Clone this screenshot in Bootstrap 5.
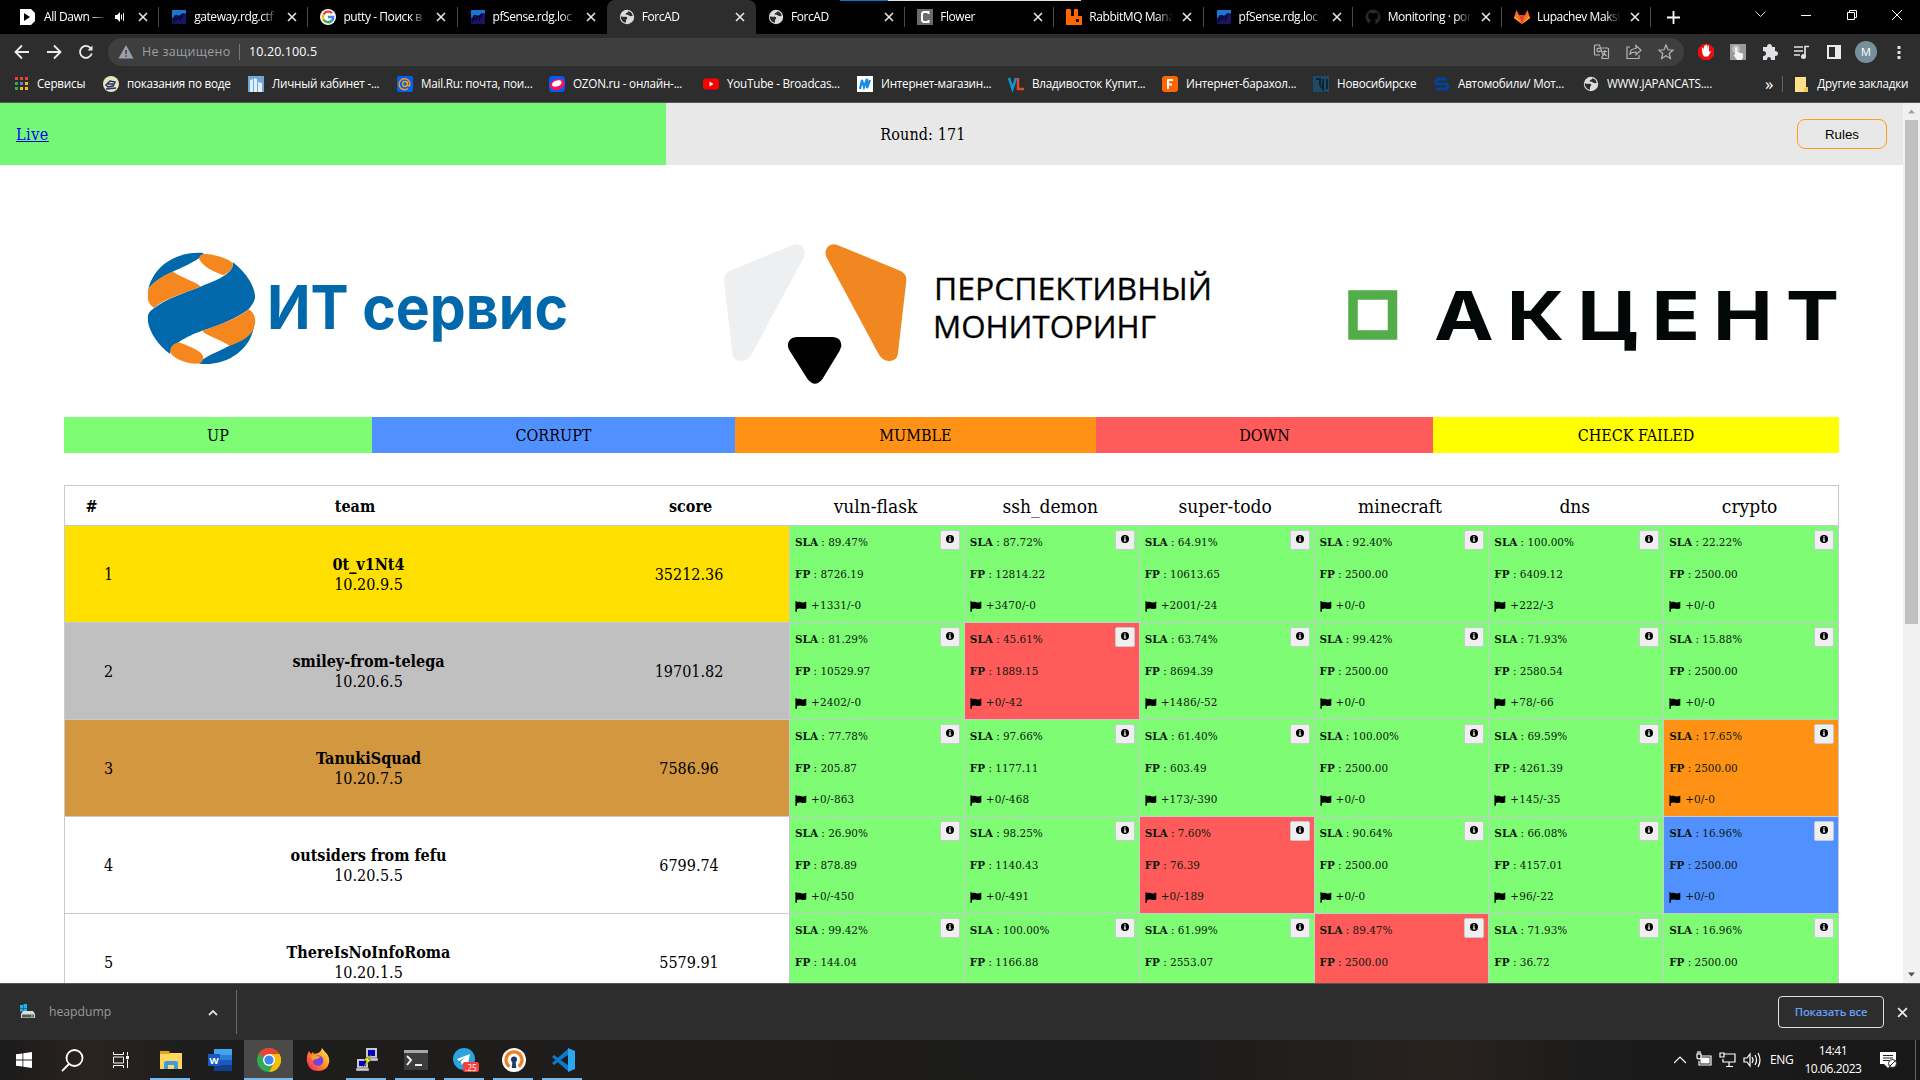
<!DOCTYPE html>
<html lang="ru">
<head>
<meta charset="utf-8">
<title>ForcAD</title>
<link href="https://cdn.jsdelivr.net/npm/bootstrap@5.3.0/dist/css/bootstrap.min.css" rel="stylesheet">
<style>
:root{--ui:"Open Sans","Noto Sans",sans-serif;--serif:"DejaVu Serif Condensed","DejaVu Serif",serif;--up:#7dfc74;--corrupt:#5191ff;--mumble:#ff9114;--down:#ff5b5b}
html,body{width:1920px;height:1080px;overflow:hidden}
body{font-family:var(--ui);font-size:12px;line-height:1;color:#fff;background:#000}
svg{flex:none;display:block}
.tabstrip{height:34px;background:#000}
.topline{left:840px;top:0;width:241px;height:1px;background:linear-gradient(90deg,#0078d7 48px,#e5e5e5 48px)}
.tab{width:149.2px;padding-left:12px;height:34px;letter-spacing:-.43px}
.tab:first-child{padding-left:9px}
.tab::after{content:"";position:absolute;right:0;top:7px;width:1px;height:20px;background:#4a4a4a}
.tab.on{background:#2d2d2d;border-radius:8px 8px 0 0}
.tab.on::after,.tab.nosep::after{display:none}
.ttl{width:85px;margin-left:7px;margin-right:1px;line-height:18px;overflow:hidden;white-space:nowrap;-webkit-mask-image:linear-gradient(90deg,#000 68px,transparent 84px)}
.ttl.short{width:64px;margin-left:9px;-webkit-mask-image:linear-gradient(90deg,#000 46px,transparent 64px)}
.toolbar{height:36px;background:#2d2d2d}
.omni{width:1576px;height:28px;margin-left:7px;border-radius:14px;background:#3e3e3e;font-size:12.5px;padding:0 7px 0 10px}
.bookmarks{height:33px;background:#2d2d2d;border-bottom:1px solid #555;padding:0 0 4px 13px;font-size:11.7px;letter-spacing:-.24px;white-space:nowrap}
.bm{gap:8px}
.page{height:880px;background:#fff;color:#000;font-family:var(--serif);font-size:16px;overflow:hidden}
.content-col{width:1903px}
.topbar{height:62px;padding:2px 16px 0;background:linear-gradient(90deg,#75f776 666px,#e8e8e8 666px)}
.topbar a{color:#00e;letter-spacing:.5px}
.rules{width:90px;height:30px;margin-top:-2px;border:1px solid #ff9d1a;border-radius:8px;background:#e8e8e8;font:13.3px "Liberation Sans",sans-serif;color:#000}
.wrap{padding:0 64px}
.legend{height:36px}
.legend>div{padding-top:2px}
.board{margin-top:32px;border:1px solid #c6cad1;height:600px}
.hrow{height:40px;border-bottom:1px solid #c6cad1;padding-top:2px}
.hrow .svc{font-size:19px;padding:0 2px 1px 0}
.trow{height:97px;border-bottom:1px solid #c6cad1}
.svc{width:174.83px}
.trow .svc{border-left:1px solid #c6cad1;padding:1px 0 0 5px;font-size:11.6px;color:#0b1a0b}
.trow .svc>div{height:31.9px;display:flex;align-items:center}
.trow .svc>div:nth-child(3){letter-spacing:.15px;padding-bottom:1px}
.info{right:4px;top:4px;width:20px;height:20px;background:#efefef;border:1px solid #c6cad1;border-radius:2px;display:flex;justify-content:center;padding-top:4px}
.up{background:var(--up)}.corrupt{background:var(--corrupt)}.mumble{background:var(--mumble)}.down{background:var(--down)}.failed{background:#ff0}
.p1{background:#ffdf00}.p2{background:silver}.p3{background:#d2973f}.p4{background:#fff}
.team{line-height:20px;padding-top:2px}
.num{padding-top:2px}
.rail{width:17px;background:#f1f1f1}
.thumb{height:504px;background:#c1c1c1;margin:0 auto auto;width:13px}
.dl{height:57px;background:#2d2d2d;border-top:1px solid #555}
.showall{width:106px;height:32px;border:1px solid #e0e0e0;border-radius:4px;color:#669df6;font-size:11.3px;font-weight:600;letter-spacing:-.22px}
.taskbar{height:40px;background:linear-gradient(90deg,#1b1b1b,#2a2320 90px,#1d1d1d 190px,#1f1d1b 600px,#1b1b1b 1150px,#28221f 1450px,#1b1b1b 1600px,#181818)}
.app{width:49px;height:40px;display:flex;align-items:center;justify-content:center;position:relative}
.app:first-child{width:48px}
.run::after{content:"";position:absolute;left:4px;right:5px;bottom:0;height:2px;background:#76b9ed}
.app.cur{background:#4b4a48}.app.cur::after{left:0;right:0}
</style>
<script src="https://cdn.jsdelivr.net/npm/bootstrap@5.3.0/dist/js/bootstrap.bundle.min.js"></script>
</head>
<body class="d-flex flex-column">
<svg width="0" height="0" class="position-absolute">
<symbol id="x" viewBox="0 0 10 10"><path d="M1 1l8 8M9 1l-8 8" stroke="#e8e8e8" stroke-width="1.6"/></symbol>
<symbol id="globe" viewBox="0 0 16 16"><circle cx="8" cy="8" r="7.200" fill="#dadce0"/><path d="M1.800 7.200Q4 8 6.500 7.800 8.300 7.800 8.300 9T7 10.800V13.700Q3 13.200 1.800 9zM13.800 6.500Q12 8 10 6.600T7 5.800Q6 5 7.300 4 9 3.800 9.200 2.200 12.500 2.800 13.800 6.500z" fill="#2d2d2d"/></symbol>
<symbol id="pf" viewBox="0 0 16 16"><path d="M1 1h14v5L1 9z" fill="#1976d2"/><path d="M1 9l14-5v11H1z" fill="#1b1464"/><path d="M2.500 13.500L4 6.500M4 7q3.500-1 3 1.500T3.600 10M9 11.500l1.300-5q.5-1.800 2.500-1.500M8.500 7.500h3.500" fill="none" stroke="#080830" stroke-width="1.500"/></symbol>
<symbol id="flag" viewBox="0 0 12 11"><path d="M.4.3h1.500v1C4 .5 5.300.8 7 1.400c1.500.4 2.800 0 4.300-.8v6.600C9.500 8.200 8 8.300 6.500 7.800 5 7.300 3.500 7.300 1.900 8v2.800H.4z"/></symbol>
<symbol id="inf" viewBox="0 0 8 8"><circle cx="4" cy="4" r="4"/><path d="M3.300 1.300h1.400v1.200H3.300zM2.900 3.200h1.800v2.400h.5v.9H2.800v-.9h.5V4.100h-.4z" fill="#efefef"/></symbol>
</svg>

<div class="tabstrip d-flex align-items-center position-relative">
<div class="topline position-absolute"></div>
<div id="tabs" class="d-flex" style="padding-left:10px"></div>
<svg class="ms-3" width="13" height="13" viewBox="0 0 13 13"><path d="M6.500 0v13M0 6.500h13" stroke="#fff" stroke-width="1.800"/></svg>
<div class="d-flex ms-auto align-items-center" style="gap:35.500px;padding:0 18px 5px 0">
<svg width="11" height="7" viewBox="0 0 11 7"><path d="M.5.5l5 5 5-5" fill="none" stroke="#ddd"/></svg>
<svg width="10" height="10" viewBox="0 0 10 10"><path d="M0 5.500h10" stroke="#fff"/></svg>
<svg width="10" height="10" viewBox="0 0 10 10"><path d="M.5 2.500h7v7h-7zM2.500 2.500v-2h7v7h-2" fill="none" stroke="#fff"/></svg>
<svg width="10" height="10" viewBox="0 0 10 10"><path d="M0 0l10 10M10 0L0 10" stroke="#fff"/></svg>
</div>
</div>

<div class="toolbar d-flex align-items-center">
<svg width="101" height="36" viewBox="0 0 101 36" fill="none" stroke="#e8eaed" stroke-width="1.800"><path d="M29 18H16M22 11.500L15.500 18l6.500 6.500M47 18h13M54 11.500l6.500 6.500-6.500 6.500M91 14.500a6 6 0 1 0 .8 5"/><path d="M92.500 11.500v5h-5z" fill="#e8eaed" stroke="none"/></svg>
<div class="omni d-flex align-items-center">
<svg width="16" height="14" viewBox="0 0 16 14"><path d="M8 0l7.500 13.500H.5z" fill="#9aa0a6"/><path d="M7.200 5h1.600v4H7.200zM7.200 10.200h1.600v1.600H7.200z" fill="#3e3e3e"/></svg>
<span style="color:#9aa0a6;margin-left:8px;width:97px;white-space:nowrap;letter-spacing:.3px">Не защищено</span><span style="border-left:1px solid #777;height:16px;margin-right:9px"></span><span style="letter-spacing:.1px">10.20.100.5</span>
<svg class="ms-auto" width="84" height="18" viewBox="0 0 84 18" fill="none" stroke="#b4b6b9" stroke-width="1.200"><path d="M7 12H2.500Q1.500 12 1.500 11V3q0-1 1-1h4l3.500 10-1.500 3.500M8.500 5h6q1 0 1 1v8.500q0 1-1 1h-6"/><path d="M7 5.500q-3-1-3 1.500t3 1.500V7M9.500 8.500h4.500M12 7v1.500c0 2-1 3-2 4M10.500 10l3 3"/><path d="M37 4h-3v11.500h12V12M37 11c0-4 3-5.500 6-5.500V2.500l5 4.700-5 4.500V9c-3 0-4.500.5-6 2z"/><path d="M73 2l2 4.800 5 .4-3.800 3.300 1.200 5-4.400-2.700-4.400 2.700 1.200-5L66 7.200l5-.4z"/></svg>
</div>
<svg style="margin-left:12px" width="220" height="28" viewBox="1696 38 220 28"><path d="M1702.500 44h7l4.500 4.500v7l-4.500 4.500h-7l-4.500-4.500v-7z" fill="#e81010"/><path d="M1702 51v-3q1-1 1.500 0l.5 3v-5q1-1 1.500 0v4-5q1-1 1.500 0v5l.5-4q1-1 1.500 0v6l1-1q1 0 .5 1.500l-2.500 4h-4q-2-3-2-6z" fill="#fff"/><rect x="1730" y="44" width="16" height="16" fill="#9a9a9a"/><circle cx="1736" cy="49" r="4" fill="#bdbdbd"/><path d="M1735 48q1.500-2 2.500 0v4l5.500 1.500v4l-1.500 2.500h-4.500l-3.500-5 1.500-.5z" fill="#f2f2f2"/><path d="M1763 47h4q0-3 2.500-3t2.500 3h3v4q3 0 3 2.500t-3 2.500v4h-4q0-3-2-3t-2 3h-4v-4q3 0 3-2.500t-3-2.500z" fill="#dfe1e5"/><path d="M1794 47h9M1794 51h9M1794 55h6M1809 46.500h-4v10" stroke="#dfe1e5" stroke-width="1.700" fill="none"/><circle cx="1803.500" cy="56.500" r="2.500" fill="#dfe1e5"/><path d="M1828 46h12v12h-12z" stroke="#e8eaed" stroke-width="2" fill="none"/><path d="M1835 46h5v12h-5z" fill="#e8eaed"/><circle cx="1866" cy="52" r="11" fill="#78909c"/><text x="1866" y="56" fill="#fff" font-size="11" text-anchor="middle">M</text><path d="M1897.500 46h3v3h-3zM1897.500 51h3v3h-3zM1897.500 56h3v3h-3z" fill="#dfe1e5"/></svg>
</div>

<div class="bookmarks d-flex align-items-center"><div id="bms" class="d-flex"></div>
<span style="font-size:17px;line-height:14px;margin-left:32px">»</span><span style="border-left:1px solid #666;height:16px;margin:0 12px 0 9px"></span>
<svg width="13" height="15" viewBox="0 0 13 15"><path d="M0 0h11v10h2v5H0z" fill="#ffe08a"/><path d="M11 10h2v5h-4v-3z" fill="#f5c84b"/></svg><span style="margin-left:9px">Другие закладки</span>
</div>

<div class="page d-flex">
<div class="content-col">
<div class="topbar d-flex justify-content-between align-items-center"><a href="#">Live</a><span style="letter-spacing:.1px">Round: 171</span><button class="rules">Rules</button></div>
<div class="wrap">
<div class="d-flex" style="padding-left:84px">
<svg width="420" height="252" viewBox="148 165 420 252"><g transform="translate(100 220) scale(.40816 .33333)"><g fill="#0068ab"><path d="M118 210C130 140 185 93 253 99V104C235 125 195 145 178 155 150 172 125 190 118 210z"/><path d="M325 126C360 160 380 200 380 232 378 250 364 268 364 268 340 292 290 318 250 332 210 350 172 375 172 402 135 370 115 320 117 290 118 275 133 264 133 264 160 238 200 222 250 198 300 175 330 155 325 126z"/><path d="M243 431C250 412 290 395 317 377 345 362 370 345 377 320 368 390 310 440 243 431z"/></g><g fill="#f6871f"><path d="M242 115C246 100 255 102 262 102 290 105 320 120 325 130 328 145 315 158 303 166 275 155 250 138 242 115z"/><path d="M178 155C200 172 240 188 247 200 200 222 150 240 133 264 115 250 115 230 118 210 125 190 155 165 178 155z"/><path d="M364 268C380 280 384 300 377 325 370 350 340 370 317 377 300 360 258 346 250 332 290 318 345 290 364 268z"/><path d="M193 367C230 382 255 400 253 415 250 430 245 431 235 431 200 428 175 410 172 395 171 382 180 370 193 367z"/></g></g><text x="267" y="329" font-family="Inter,sans-serif" font-weight="700" font-size="60" fill="#0068ab" textLength="301" lengthAdjust="spacingAndGlyphs">ИТ сервис</text></svg>
<svg style="margin-left:155px" width="490" height="252" viewBox="723 165 490 252"><g transform="translate(700 220) scale(.35714 .33333)"><path d="M83 153L262 74Q285 68 293 92 295 102 290 113L147 398Q135 424 113 423 93 420 91 402L67 180Q67 162 83 153z" fill="#eeeff1"/><path d="M83 153L262 74Q285 68 293 92 295 102 290 113L147 398Q135 424 113 423 93 420 91 402L67 180Q67 162 83 153z" fill="#f18721" transform="translate(645) scale(-1 1)"/><path d="M270 351H372Q396 353 396 378L391 392 343 477Q322 505 301 477L251 392Q246 385 246 375 248 353 270 351z"/></g><g font-family="Open Sans,sans-serif" font-weight="400" font-size="31" stroke="#000" stroke-width=".3"><text x="934" y="300" textLength="278" lengthAdjust="spacingAndGlyphs">ПЕРСПЕКТИВНЫЙ</text><text x="933" y="337.500" textLength="223" lengthAdjust="spacingAndGlyphs">МОНИТОРИНГ</text></g></svg>
<svg style="margin-left:134px" width="492" height="252" viewBox="1347 165 492 252"><path d="M1353 295h39.500v40H1353z" fill="none" stroke="#52ac48" stroke-width="9.500"/><text x="1434" y="339.500" font-family="Inter,sans-serif" font-weight="700" font-size="68" fill="#030708" letter-spacing="11" textLength="418" lengthAdjust="spacingAndGlyphs">АКЦЕНТ</text></svg>
</div>
<div class="legend d-flex text-center align-items-stretch" id="legend"></div>
<div class="board" id="board"></div>
</div>
</div>
<div class="rail d-flex flex-column align-items-center"><svg width="17" height="17" viewBox="0 0 17 17"><path d="M5 10.500l3.500-4 3.500 4z" fill="#a3a3a3"/></svg><div class="thumb"></div><svg width="17" height="17" viewBox="0 0 17 17"><path d="M5 6.500l3.500 4 3.500-4z" fill="#505050"/></svg></div>
</div>

<div class="dl d-flex align-items-center">
<svg style="margin-left:20px" width="16" height="16" viewBox="0 0 16 16"><path d="M0 1h3v3H0zM3.500 0H7v4H3.500zM0 4.500h3v3H0zM3.500 4.500H7V8H3.500z" fill="#18b5f0"/><path d="M3 7h10l2 3v4H1v-4z" fill="#d8dcdf"/><path d="M2 10.500h12v3H2z" fill="#555"/><path d="M11 11h2v2h-2z" fill="#3c3"/></svg>
<span style="color:#999;font-size:12.200px;margin-left:13px;width:159px">heapdump</span>
<svg width="10" height="7" viewBox="0 0 10 7"><path d="M1 6l4-4 4 4" fill="none" stroke="#ddd" stroke-width="1.800"/></svg>
<span style="height:44px;border-left:1px solid #6a6a6a;margin-left:18px"></span>
<button class="showall bg-transparent ms-auto">Показать все</button>
<svg style="margin:0 12px 0 13px" width="11" height="11"><use href="#x"/></svg>
</div>

<div class="taskbar d-flex align-items-center">
<div class="app"><svg width="16" height="16" viewBox="0 0 16 16" fill="#fff"><path d="M0 2.300l6.500-.9v6.200H0zM7.300 1.300L16 0v7.600H7.300zM0 8.400h6.500v6.200L0 13.700zM7.300 8.400H16V16l-8.700-1.300z"/></svg></div>
<div class="app"><svg width="23" height="23" viewBox="0 0 23 23" fill="none" stroke="#fff" stroke-width="1.800"><circle cx="13.500" cy="9" r="8"/><path d="M8 15l-7 7"/></svg></div>
<div class="app"><svg width="17" height="16" viewBox="0 0 17 16" fill="none" stroke="#fff"><path d="M.5 0v2.500h10V0M.5 5h10v6H.5zM.5 16v-2.500h10V16M14.500 0v3.500M14.500 7.500V16"/><path d="M13 4h3v3h-3z" fill="#fff" stroke="none"/></svg></div>
<div class="app run"><svg width="22" height="19" viewBox="0 0 22 19"><path d="M0 0h9l1 2h12v16H0z" fill="#e5a50f"/><path d="M0 3h9l1-1h12v16H0z" fill="#ffd75e"/><path d="M4 18v-6q0-2 2-2h10q2 0 2 2v6h-4v-4H8v4z" fill="#3f9bdc"/></svg></div>
<div class="app"><svg width="24" height="22" viewBox="0 0 24 22"><path d="M6 0h18v22H6z" fill="#185abd"/><path d="M6 0h18v6H6z" fill="#41a5ee"/><path d="M6 6h18v5H6z" fill="#2b7cd3"/><path d="M6 16h18v6H6z" fill="#103f91"/><rect y="5" width="12" height="12" fill="#185abd"/><text x="6" y="14.500" font-size="9.500" font-weight="700" fill="#fff" text-anchor="middle">W</text></svg></div>
<div class="app run cur"><svg width="24" height="24" viewBox="0 0 24 24"><circle cx="12" cy="12" r="12" fill="#34a853"/><path d="M12 12L1.600 6A12 12 0 0 1 22.400 6z" fill="#ea4335"/><path d="M12 6h10.400A12 12 0 0 1 12 24l5.200-9z" fill="#fbbc05"/><circle cx="12" cy="12" r="6" fill="#fff"/><circle cx="12" cy="12" r="4.600" fill="#4285f4"/></svg></div>
<div class="app"><svg width="24" height="24" viewBox="0 0 24 24"><defs><linearGradient id="ff" x1="1" y1="0" x2="0" y2="1"><stop stop-color="#fff44f"/><stop offset=".5" stop-color="#ff8a25"/><stop offset="1" stop-color="#f0146a"/></linearGradient></defs><path d="M3 3l2 3 2-2 1 2 4-1q3-1 4-5 2 3 5 6 3 4 2 9-2 8-11 8T1 14Q0 8 3 3z" fill="url(#ff)"/><circle cx="12" cy="12.500" r="5.300" fill="#7542e5"/><path d="M5 8q4-2 7 0l3 1-4 2q-3 0-4 2-2-2-2-5z" fill="#ff9a28"/></svg></div>
<div class="app run"><svg width="24" height="24" viewBox="0 0 24 24"><path d="M12 1h9v8h-9zM3 12h9v7H3z" fill="#0000c8" stroke="#c9c9c9" stroke-width="2"/><path d="M10 10h13v3H10zM1 20h13v3H1z" fill="#d0d0d0" stroke="#333" stroke-width=".5"/><path d="M17 6l-8 6 3 1-4 6 8-7-3-1z" fill="#ff0" stroke="#222" stroke-width=".4"/></svg></div>
<div class="app run"><svg width="24" height="20" viewBox="0 0 24 20"><path d="M0 0h24v20H0z" fill="#3d3d3d"/><path d="M0 0h24v3H0z" fill="#a8a8a8"/><path d="M3 6l4 4-4 5M11 15h7" fill="none" stroke="#eee" stroke-width="2"/></svg></div>
<div class="app run"><svg style="margin-left:3px" width="26" height="24" viewBox="0 0 26 24"><circle cx="11" cy="11" r="11" fill="#2ba3dc"/><path d="M4 11l13-5-2.500 12-4-3-2 2-.5-4 5-4-7 4z" fill="#fff"/><rect x="10" y="14" width="16" height="10" rx="2" fill="#f4403a"/><text x="18" y="22.500" fill="#fff" font-size="8.500" text-anchor="middle">.25</text></svg></div>
<div class="app run"><svg width="24" height="24" viewBox="0 0 24 24"><circle cx="12" cy="12" r="12" fill="#fff"/><path d="M7.500 18.500a8 8 0 1 1 9 0" fill="none" stroke="#ef7f22" stroke-width="3.300"/><circle cx="12" cy="11.500" r="3" fill="#1c3c66"/><path d="M10.500 13h3l.8 7H9.700z" fill="#1c3c66"/></svg></div>
<div class="app run"><svg width="24" height="24" viewBox="0 0 24 24"><path d="M18 0v24L1 9l2-2 15 11V6L3 17l-2-2z" fill="#0b7bc8"/><path d="M17 0l7 3v18l-7 3z" fill="#29a8f2"/></svg></div>
<svg class="ms-auto" width="90" height="20" viewBox="1675 1050 90 20" fill="none" stroke="#fff" stroke-width="1.200"><path d="M1675 1063l6-6 6 6M1702 1056h10v9h-12v-4M1698 1054h4v3q0 2-2 2t-2-2zM1699 1051v3M1701 1051v3M1725 1054h11v8h-12v-3M1730 1062v4M1727 1066.500h7M1721 1053h4v4h-4z"/><path d="M1702 1058h8v5h-8z" fill="#fff"/><path d="M1745 1058h3l3-4v12l-3-4h-3zM1753 1057q2 3 0 6M1756 1055q3 5 0 10M1759 1053q4 7 0 14"/></svg>
<span style="margin-left:6px;width:30px;letter-spacing:-.4px">ENG</span>
<div class="text-center" style="width:66px;line-height:18px;letter-spacing:-.4px">14:41<br>10.06.2023</div>
<svg style="margin:0 12px 0 14px" width="17" height="17" viewBox="0 0 17 17"><path d="M0 0h16v12h-4l-4 4-4-4H0z" fill="#fff"/><path d="M3 3.500h10M3 6h10M3 8.500h6" stroke="#222"/><circle cx="12.500" cy="11.500" r="4" fill="#fff" stroke="#222"/><path d="M10 14l5-5" stroke="#222"/></svg>
<span style="border-left:1px solid #666;height:40px;margin:0 4px 0 6px"></span>
</div>

<script>
const use=(id,w=16)=>`<svg width="${w}" height="${w}"><use href="#${id}"/></svg>`;
const svg=b=>`<svg width="16" height="16" viewBox="0 0 16 16">${b}</svg>`;
const google=svg('<circle cx="8" cy="8" r="8" fill="#fff"/><g fill="none" stroke-width="2.400"><path d="M12 4.200A5.300 5.300 0 0 0 3.500 5.500" stroke="#ea4335"/><path d="M3.500 5.500a5.300 5.300 0 0 0 0 5" stroke="#fbbc05"/><path d="M3.500 10.500A5.300 5.300 0 0 0 11.500 12" stroke="#34a853"/><path d="M11.500 12Q13.300 10.500 13.200 8H8" stroke="#4285f4"/></g>');
const tabs=[
[svg('<path d="M1 0h11l4 4v8l-4 4H1z" fill="#fff"/><path d="M5 4v8l6-4z"/>'),'All Dawn —'],
[use('pf'),'gateway.rdg.ctf -'],[google,'putty - Поиск в'],[use('pf'),'pfSense.rdg.loc -'],
[use('globe'),'ForcAD'],[use('globe'),'ForcAD'],
[svg('<path d="M0 0h16v16H0z" fill="#6b6b6b"/><path d="M11.500 5V3h-5L5 4.500v7L6.500 13h5v-2" fill="none" stroke="#fff" stroke-width="2"/>'),'Flower'],
[svg('<path d="M0 16V1q0-1 1-1h3q1 0 1 1v6h3V1q0-1 1-1h2q1 0 1 1v6h4v9zM10 10v3h3v-3z" fill="#f60"/>'),'RabbitMQ Mana'],
[use('pf'),'pfSense.rdg.loc -'],
[svg('<path d="M5.500 15v-2.200c-2 .4-2.500-1-3-1.800M5.500 15q-5-1.800-5-7a7.500 7.500 0 1 1 15 0q0 5.200-5 7v-3q0-1-.6-1.500c2.600-.3 3.600-2 3.200-4.500L12 3.500l-2 .8H6l-2-.8-.6 2.500C3 9 4 10.300 6.200 10.600 5.500 11 5.500 13 5.500 15z" fill="#24292e"/>'),'Monitoring · por'],
[svg('<path d="M8 15L0 9l2.500-8L5 6h6l2.500-5L16 9z" fill="#fc6d26"/><path d="M8 15L5 6h6z" fill="#e24329"/><path d="M8 15L0 9l1-2zM8 15l8-6-1-2z" fill="#fca326"/>'),'Lupachev Maksi']];
document.getElementById('tabs').innerHTML=tabs.map(([i,t],k)=>`<div class="tab position-relative d-flex align-items-center ${k==4?'on':''} ${k==3?'nosep':''}">${i}<div class="ttl ${k?'':'short'}">${t}</div>${k?'':'<svg width="22" height="12" viewBox="0 0 22 12"><path d="M6 4h2l3-3v10L8 8H6z" fill="#fff"/><path d="M12.500 3.500v5M14.500 2v8" stroke="#fff"/></svg>'}<svg width="10" height="10" style="margin-left:7px"><use href="#x"/></svg></div>`).join('');
const dot=(x,y,c)=>`<rect x="${x}" y="${y}" width="3" height="3" fill="${c}"/>`;
const bms=[
[90,svg([2,7,12].map((x,i)=>dot(x,1,'#ea4335')+dot(x,6,['#34a853','#4285f4','#fbbc05'][i])+dot(x,11,['#34a853','#fbbc05','#fbbc05'][i])).join('')),'Сервисы'],
[145,svg('<circle cx="8" cy="8" r="8" fill="#e8e4b8"/><path d="M3 9l4-4 5 1-2 4-5 1zM5 8h5M3 13l10-1" fill="none" stroke="#23306b" stroke-width="1.600"/>'),'показания по воде'],
[149,svg('<path d="M0 0h16v16H0z" fill="#6fa8d6"/><path d="M2 16V4l3-1v13M6 16V2l3 1v13M10 16V6l4 1v9" fill="#e2eef8"/>'),'Личный кабинет -...'],
[152,svg('<rect width="16" height="16" rx="2" fill="#005ff9"/><circle cx="8" cy="8" r="2.500" fill="none" stroke="#ff9e00" stroke-width="1.400"/><path d="M10.500 5.500V9q1 2 2.500 0a5.500 5.500 0 1 0-2 3.500" fill="none" stroke="#ff9e00" stroke-width="1.400"/>'),'Mail.Ru: почта, пои...'],
[154,svg('<rect width="16" height="16" rx="4" fill="#005bff"/><ellipse cx="8" cy="8.500" rx="7.500" ry="5.500" fill="#f91155" transform="rotate(-20 8 8)"/><ellipse cx="8" cy="7.500" rx="5" ry="3" fill="#fff" transform="rotate(-20 8 8)"/>'),'OZON.ru - онлайн-...'],
[154,svg('<rect y="2.500" width="16" height="11" rx="3" fill="#f00"/><path d="M6.500 5.500v5l4-2.500z" fill="#fff"/>'),'YouTube - Broadcas...'],
[151,svg('<path d="M0 0h16v16H0z" fill="#fff"/><path d="M3 13l2-9 2 7 3-8v9l3-8" fill="none" stroke="#168de2" stroke-width="2.200"/>'),'Интернет-магазин...'],
[154,svg('<path d="M1 2l3.500 11L8 2" fill="none" stroke="#1592d3" stroke-width="2.500"/><path d="M10 2v11h6" fill="none" stroke="#e24a24" stroke-width="2.500"/>'),'Владивосток Купит...'],
[151,svg('<rect width="16" height="16" rx="3" fill="#f60"/><path d="M6 13V4h5M6 8.500h4" fill="none" stroke="#fff" stroke-width="2"/>'),'Интернет-барахол...'],
[121,svg('<path d="M0 0h16v16H0z" fill="#1d4a66"/><path d="M3 3h4v6l3 4V3M14 3v10" fill="none" stroke="#0d2436" stroke-width="2"/>'),'Новосибирске'],
[149,svg('<path d="M13 3H5Q2 3 2 5.500T5 8h6q3 0 3 2.500T11 13H2" fill="none" stroke="#00439c" stroke-width="3"/>'),'Автомобили/ Мот...'],
[150,use('globe'),'WWW.JAPANCATS....']];
document.getElementById('bms').innerHTML=bms.map(([w,i,t])=>`<div class="bm d-flex align-items-center" style="width:${w}px">${i}<span>${t}</span></div>`).join('');
document.getElementById('legend').innerHTML=[['up',308,'UP'],['corrupt',363,'CORRUPT'],['mumble',361,'MUMBLE'],['down',337,'DOWN'],['failed',406,'CHECK FAILED']].map(([c,w,t])=>`<div class="${c} d-flex align-items-center justify-content-center" style="width:${w}px">${t}</div>`).join('');
const S=['vuln-flask','ssh_demon','super-todo','minecraft','dns','crypto'];
const R=[
['0t_v1Nt4','10.20.9.5','35212.36','89.47 8726.19 +1331/-0|87.72 12814.22 +3470/-0|64.91 10613.65 +2001/-24|92.40 2500.00 +0/-0|100.00 6409.12 +222/-3|22.22 2500.00 +0/-0'],
['smiley-from-telega','10.20.6.5','19701.82','81.29 10529.97 +2402/-0|45.61 1889.15 +0/-42 down|63.74 8694.39 +1486/-52|99.42 2500.00 +0/-0|71.93 2580.54 +78/-66|15.88 2500.00 +0/-0'],
['TanukiSquad','10.20.7.5','7586.96','77.78 205.87 +0/-863|97.66 1177.11 +0/-468|61.40 603.49 +173/-390|100.00 2500.00 +0/-0|69.59 4261.39 +145/-35|17.65 2500.00 +0/-0 mumble'],
['outsiders from fefu','10.20.5.5','6799.74','26.90 878.89 +0/-450|98.25 1140.43 +0/-491|7.60 76.39 +0/-189 down|90.64 2500.00 +0/-0|66.08 4157.01 +96/-22|16.96 2500.00 +0/-0 corrupt'],
['ThereIsNoInfoRoma','10.20.1.5','5579.91','99.42 144.04|100.00 1166.88|61.99 2553.07|89.47 2500.00  down|71.93 36.72|16.96 2500.00']];
const cell='d-flex align-items-center justify-content-center';
document.getElementById('board').innerHTML=`<div class="hrow d-flex align-items-stretch"><b class="${cell}" style="width:53px">#</b><b class="${cell}" style="width:474px">team</b><b class="${cell} flex-fill">score</b>${S.map(s=>`<div class="svc ${cell}">${s}</div>`).join('')}</div>`+
R.map(([n,ip,sc,d],k)=>`<div class="trow d-flex align-items-stretch p${Math.min(k+1,4)}"><div class="num ${cell}" style="width:87px">${k+1}</div><div class="team text-center align-self-center" style="width:433px"><b>${n}</b><br>${ip}</div><div class="num ps-1 ${cell} flex-fill">${sc}</div>${d.split('|').map(c=>{const [s,f,g,st]=c.split(' ');return `<div class="svc position-relative ${st||'up'}"><div><span><b>SLA</b> : ${s}%</span></div><div><span><b>FP</b> : ${f}</span></div>${g?`<div><svg width="12" height="11" class="me-1"><use href="#flag"/></svg>${g}</div>`:''}<span class="info position-absolute"><svg width="8" height="8"><use href="#inf"/></svg></span></div>`}).join('')}</div>`).join('');
</script>
</body>
</html>
